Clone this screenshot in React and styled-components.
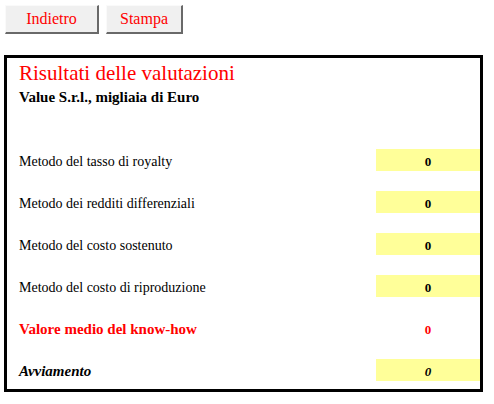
import React from "react";
import styled, { createGlobalStyle } from "styled-components";

const rows = [
  { label: "Metodo del tasso di royalty", value: "0", kind: "plain" },
  { label: "Metodo dei redditi differenziali", value: "0", kind: "plain" },
  { label: "Metodo del costo sostenuto", value: "0", kind: "plain" },
  { label: "Metodo del costo di riproduzione", value: "0", kind: "plain" },
  { label: "Valore medio del know-how", value: "0", kind: "total" },
  { label: "Avviamento", value: "0", kind: "goodwill" },
];

const App = () => {
  return (
    <>
      <GlobalStyle />
      <Toolbar>
        <Button $w={94}>Indietro</Button>
        <Button $w={77}>Stampa</Button>
      </Toolbar>

      <Panel>
        <Header>
          <Title>Risultati delle valutazioni</Title>
          <Subtitle>Value S.r.l., migliaia di Euro</Subtitle>
        </Header>

        <Rows>
          {rows.map((r) => (
            <Row key={r.label}>
              <Label $kind={r.kind}>{r.label}</Label>
              <Value $kind={r.kind}>{r.value}</Value>
            </Row>
          ))}
        </Rows>
      </Panel>
    </>
  );
};

export default App;

/* ================= STYLES ================= */

const GlobalStyle = createGlobalStyle`
  body {
    margin: 0;
    background: #fff;
    font-family: "Liberation Serif", "Times New Roman", serif;
    color: #000;
  }
`;

const Toolbar = styled.div`
  display: flex;
  gap: 7px;
  padding: 5px 0 0 5px;
`;

const Button = styled.button`
  width: ${({ $w }) => $w}px;
  height: 29px;
  padding: 0;
  background: #f0f0f0;
  border-style: solid;
  border-width: 1px 2px 2px 1px;
  border-color: #fafafa #696969 #696969 #fafafa;
  color: #ff0000;
  font-family: "Liberation Serif", "Times New Roman", serif;
  font-size: 16px;
  cursor: pointer;
`;

const Panel = styled.div`
  margin: 21px 0 0 4px;
  width: 473px;
  height: 331px;
  border: 3px solid #000;
`;

const Header = styled.div`
  padding: 3px 12px 0;
`;

const Title = styled.div`
  color: #ff0000;
  font-size: 21px;
  line-height: 24px;
`;

const Subtitle = styled.div`
  margin-top: 3px;
  font-size: 15px;
  font-weight: bold;
  line-height: 18px;
`;

const Rows = styled.div`
  display: flex;
  flex-direction: column;
  gap: 20px;
  margin-top: 43px;
`;

const Row = styled.div`
  display: grid;
  grid-template-columns: 1fr 104px;
  align-items: baseline;
  height: 22px;
`;

const Label = styled.div`
  padding-left: 12px;
  font-size: ${({ $kind }) => ($kind === "plain" ? "14px" : "15px")};
  font-weight: ${({ $kind }) => ($kind === "plain" ? "normal" : "bold")};
  font-style: ${({ $kind }) => ($kind === "goodwill" ? "italic" : "normal")};
  color: ${({ $kind }) => ($kind === "total" ? "#ff0000" : "#000")};
`;

const Value = styled.div`
  box-sizing: border-box;
  height: 22px;
  padding-top: 3px;
  line-height: 19px;
  text-align: center;
  font-size: 13px;
  font-weight: bold;
  font-style: ${({ $kind }) => ($kind === "goodwill" ? "italic" : "normal")};
  color: ${({ $kind }) => ($kind === "total" ? "#ff0000" : "#000")};
  background: ${({ $kind }) => ($kind === "total" ? "transparent" : "#ffff99")};
`;
